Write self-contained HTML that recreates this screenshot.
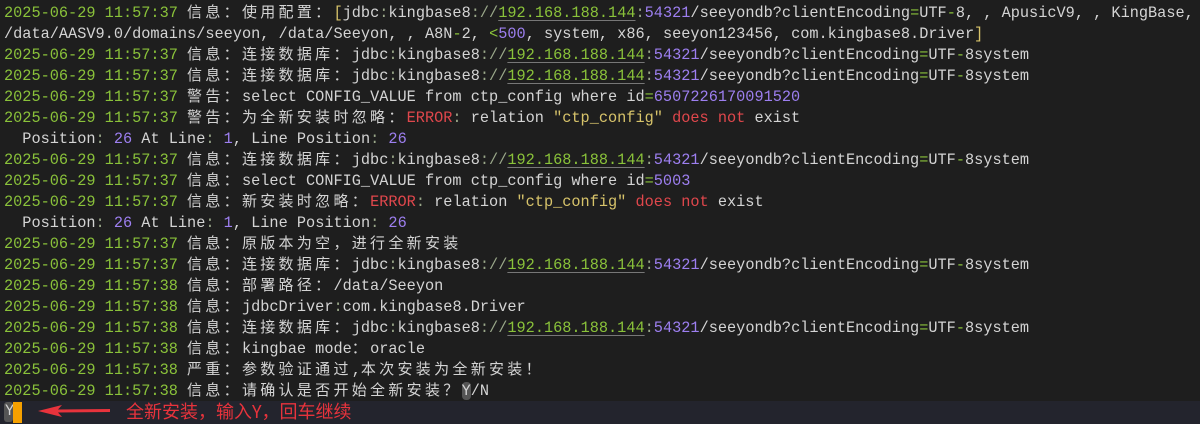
<!DOCTYPE html>
<html><head><meta charset="utf-8"><style>
html,body{margin:0;padding:0;background:#1e1e1e;width:1200px;height:424px;overflow:hidden}
#t{position:absolute;left:4px;top:3px;font-family:"Liberation Mono","DejaVu Sans Mono",monospace;font-size:15.25px;color:#d4d4d4;white-space:pre}
#t div{height:21px;line-height:21px;overflow:visible}
.d{color:#8ac23a}
.c{font-family:"Noto Sans CJK SC",sans-serif;font-size:15px;letter-spacing:3.3px;line-height:10px}
.ip{color:#8ac23a;text-decoration:underline;text-decoration-color:#777;text-underline-offset:3px}
.p{color:#9d7ff0}
.g{color:#8ac23a}
.s{color:#9aa88a}
.r{color:#e0474c}
.y{color:#d7c36a}
.hl{background:#555;border-radius:4px}
#bar{position:absolute;left:0;top:401px;width:1200px;height:23px;background:#23242d}
</style></head><body>
<div id="t"><div><span class="d">2025-06-29 11:57:37</span> <span class="c">信息：使用配置：</span><span class="y">[</span>jdbc<span class="s">:</span>kingbase8<span class="s">://</span><span class="ip">192.168.188.144</span><span class="s">:</span><span class="p">54321</span>/seeyondb?clientEncoding<span class="g">=</span>UTF<span class="g">-</span>8, , ApusicV9, , KingBase,</div><div>/data/AASV9.0/domains/seeyon, /data/Seeyon, , A8N<span class="g">-</span>2, <span class="g">&lt;</span><span class="p">500</span>, system, x86, seeyon123456, com.kingbase8.Driver<span class="y">]</span></div><div><span class="d">2025-06-29 11:57:37</span> <span class="c">信息：连接数据库：</span>jdbc<span class="s">:</span>kingbase8<span class="s">://</span><span class="ip">192.168.188.144</span><span class="s">:</span><span class="p">54321</span>/seeyondb?clientEncoding<span class="g">=</span>UTF<span class="g">-</span>8system</div><div><span class="d">2025-06-29 11:57:37</span> <span class="c">信息：连接数据库：</span>jdbc<span class="s">:</span>kingbase8<span class="s">://</span><span class="ip">192.168.188.144</span><span class="s">:</span><span class="p">54321</span>/seeyondb?clientEncoding<span class="g">=</span>UTF<span class="g">-</span>8system</div><div><span class="d">2025-06-29 11:57:37</span> <span class="c">警告：</span>select CONFIG_VALUE from ctp_config where id<span class="g">=</span><span class="p">6507226170091520</span></div><div><span class="d">2025-06-29 11:57:37</span> <span class="c">警告：为全新安装时忽略：</span><span class="r">ERROR</span><span class="s">:</span> relation <span class="y">"ctp_config"</span> <span class="r">does not</span> exist</div><div>  Position<span class="s">:</span> <span class="p">26</span> At Line<span class="s">:</span> <span class="p">1</span>, Line Position<span class="s">:</span> <span class="p">26</span></div><div><span class="d">2025-06-29 11:57:37</span> <span class="c">信息：连接数据库：</span>jdbc<span class="s">:</span>kingbase8<span class="s">://</span><span class="ip">192.168.188.144</span><span class="s">:</span><span class="p">54321</span>/seeyondb?clientEncoding<span class="g">=</span>UTF<span class="g">-</span>8system</div><div><span class="d">2025-06-29 11:57:37</span> <span class="c">信息：</span>select CONFIG_VALUE from ctp_config where id<span class="g">=</span><span class="p">5003</span></div><div><span class="d">2025-06-29 11:57:37</span> <span class="c">信息：新安装时忽略：</span><span class="r">ERROR</span><span class="s">:</span> relation <span class="y">"ctp_config"</span> <span class="r">does not</span> exist</div><div>  Position<span class="s">:</span> <span class="p">26</span> At Line<span class="s">:</span> <span class="p">1</span>, Line Position<span class="s">:</span> <span class="p">26</span></div><div><span class="d">2025-06-29 11:57:37</span> <span class="c">信息：原版本为空，进行全新安装</span></div><div><span class="d">2025-06-29 11:57:37</span> <span class="c">信息：连接数据库：</span>jdbc<span class="s">:</span>kingbase8<span class="s">://</span><span class="ip">192.168.188.144</span><span class="s">:</span><span class="p">54321</span>/seeyondb?clientEncoding<span class="g">=</span>UTF<span class="g">-</span>8system</div><div><span class="d">2025-06-29 11:57:38</span> <span class="c">信息：部署路径：</span>/data/Seeyon</div><div><span class="d">2025-06-29 11:57:38</span> <span class="c">信息：</span>jdbcDriver<span class="s">:</span>com.kingbase8.Driver</div><div><span class="d">2025-06-29 11:57:38</span> <span class="c">信息：连接数据库：</span>jdbc<span class="s">:</span>kingbase8<span class="s">://</span><span class="ip">192.168.188.144</span><span class="s">:</span><span class="p">54321</span>/seeyondb?clientEncoding<span class="g">=</span>UTF<span class="g">-</span>8system</div><div><span class="d">2025-06-29 11:57:38</span> <span class="c">信息：</span>kingbae mode<span class="c">：</span>oracle</div><div><span class="d">2025-06-29 11:57:38</span> <span class="c">严重：参数验证通过</span>,<span class="c">本次安装为全新安装！</span></div><div><span class="d">2025-06-29 11:57:38</span> <span class="c">信息：请确认是否开始全新安装？</span><span class="hl">Y</span>/N</div></div>
<div id="bar"></div>
<div style="position:absolute;left:4px;top:402px;width:9px;height:20px;background:#555;border-radius:3px"></div>
<div style="position:absolute;left:5px;top:401px;font-family:'Liberation Mono',monospace;font-size:15.25px;line-height:21px;color:#d4d4d4">Y</div>
<div style="position:absolute;left:13px;top:402px;width:9px;height:21px;background:#f5a000"></div>
<svg style="position:absolute;left:36px;top:403px" width="80" height="16"><polygon points="2,8 26,2 22,6.5 74,6 74,9 22,9.5 26,14" fill="#e8333c"/></svg>
<div style="position:absolute;left:126px;top:400px;font-family:'Noto Sans CJK SC',sans-serif;font-size:18px;line-height:22px;color:#e8333c">全新安装，输入Y，回车继续</div>
</body></html>
